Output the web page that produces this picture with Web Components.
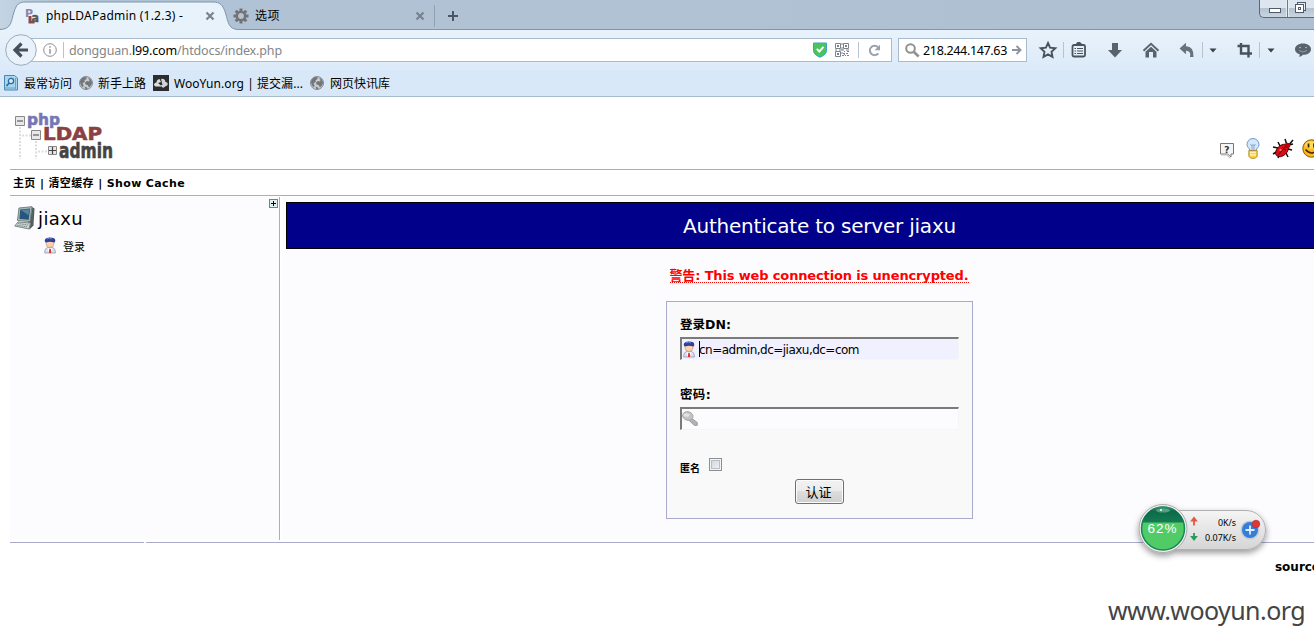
<!DOCTYPE html>
<html lang="zh-CN">
<head>
  <meta charset="UTF-8">
  <title>phpLDAPadmin (1.2.3) -</title>
  <style>
    html, body {
      margin: 0;
      width: 1314px;
      height: 640px;
      overflow: hidden;
      background: #fff;
    }
    body {
      position: relative;
      font-family: "Noto Sans", "Noto Sans CJK SC", sans-serif;
      font-size: 12px;
      color: #000;
    }
  </style>
</head>
<body>

<browser-tabs></browser-tabs>
<nav-toolbar></nav-toolbar>
<bookmark-bar></bookmark-bar>
<pla-page></pla-page>
<speed-widget></speed-widget>

<script>
  // Inline SVG for each icon: [width, height, markup]
  const ICONS = {
    pla: [16, 16, '<g font-family="DejaVu Sans" font-weight="bold"><text x="1" y="9" font-size="11" fill="#8d83a8">P</text><text x="7.500" y="13.500" font-size="12" fill="#555" stroke="#555" stroke-width=".4" textLength="7.500" lengthAdjust="spacingAndGlyphs">a</text></g><path d="M4.500 8v7.500h6v-2.500h-3V8z" fill="#8a4a4c"/>'],
    close: [10, 10, '<path d="M1.500 1.500l7 7M8.500 1.500l-7 7" stroke="#78838e" stroke-width="2.200"/>'],
    gear: [16, 16, '<g stroke="#737373" stroke-width="3"><path d="M8 .5v15M.5 8h15M2.700 2.700l10.600 10.600M13.300 2.700l-10.600 10.600"/></g><circle cx="8" cy="8" r="5.300" fill="#737373"/><circle cx="8" cy="8" r="2.900" fill="#b3c4d5"/>'],
    plus: [12, 12, '<path d="M6 1v10M1 6h10" stroke="#4a5763" stroke-width="2"/>'],
    back: [32, 32, '<circle cx="16" cy="16" r="15.300" fill="#e9f2fb" stroke="#9bacbf"/><path d="M16.500 9.500L10 16l6.500 6.500M10.500 16H23" fill="none" stroke="#44505c" stroke-width="3.200"/>'],
    info: [14, 14, '<circle cx="7" cy="7" r="6.300" fill="none" stroke="#8e8e8e"/><path d="M7 6v4.800M7 3.200v1.600" stroke="#8e8e8e" stroke-width="1.400"/>'],
    shield: [14, 16, '<path d="M.5 1h13v7.500q0 4-6.500 6.800Q.5 12.500.5 8.500z" fill="#4cc45c" stroke="#36a7c8"/><path d="M3.800 6.800l2.500 2.700 4.200-4.600" fill="none" stroke="#fff" stroke-width="1.900"/>'],
    qr: [14, 14, '<g fill="none" stroke="#7b848d"><path d="M.5.500h5v5h-5zM8.500.500h5v5h-5zM.5 8.500h5v5h-5z"/><path d="M2 3h2M10 3h2M2 11h2" stroke-width="2"/><path d="M7 0v2M7 4v3M0 7h2M4 7h5M11 7h3M7 9v2M9 8.500h1M12 8.500h2M8 10.500h2M11 10.500h2M7 12.500h2M10 12.500h1M12 12.500h2M9 11.500h1"/></g>'],
    reload: [13, 13, '<path d="M10.300 9.300A4.700 4.700 0 1 1 10 3.200" fill="none" stroke="#98a1ab" stroke-width="2"/><path d="M12 .8v5.400H6.600z" fill="#98a1ab"/>'],
    search: [15, 15, '<circle cx="5.500" cy="5.500" r="4.300" fill="none" stroke="#919191" stroke-width="2"/><path d="M8.700 8.700l5 4.800" stroke="#919191" stroke-width="2.600"/>'],
    go: [10, 10, '<path d="M0 5h8M4.500 1l4 4-4 4" fill="none" stroke="#8b959f" stroke-width="1.900"/>'],
    star: [18, 18, '<path d="M9 2l2.100 4.700 5.200.6-3.800 3.500 1 5.100L9 13.400l-4.500 2.500 1-5.100L1.700 7.300l5.200-.6z" fill="none" stroke="#49535d" stroke-width="1.900"/>'],
    list: [18, 18, '<rect x="2.500" y="4" width="12.500" height="11.500" rx="1.500" fill="#e6eff8" stroke="#49535d" stroke-width="1.800"/><path d="M6 4V2.500L7.500 1h2.500l1.500 1.500V5H6z" fill="#49535d"/><path d="M4.500 7.500h1.500m1 0h6M4.500 10h1.500m1 0h6M4.500 12.500h1.500m1 0h6" stroke="#49535d" stroke-width="1.100"/>'],
    down: [18, 18, '<path d="M6 2h6v7h4l-7 7.500L2 9h4z" fill="#59636d"/>'],
    home: [18, 18, '<path d="M1.500 9.700L9 2.700l7.500 7" fill="none" stroke="#59636d" stroke-width="1.900"/><path d="M9 5.700l5.500 5V16.500H11V11H7v5.500H3.500v-5.800z" fill="#59636d"/>'],
    undo: [18, 18, '<path d="M1.500 7.500L8 1.800v3.500q8 .2 7.500 10.700H12q1.500-6-4-6.300v3.500z" fill="#68727c"/>'],
    caret: [8, 5, '<path d="M.5.500h7L4 4.500z" fill="#39424a"/>'],
    crop: [18, 18, '<path d="M5 2v10.500h11M1.500 5h11v11.500" fill="none" stroke="#49535d" stroke-width="2.400"/>'],
    chat: [18, 18, '<path d="M9 2.500c4.800 0 8 2.500 8 5.700s-3.200 5.600-8 5.600q-1.500 2-4 2 1-1 .6-2.600C2.700 12.400 1 10.600 1 8.200 1 5 4.200 2.500 9 2.500z" fill="#59636d"/><circle cx="6" cy="6.500" r=".8" fill="#b5c2cf"/><circle cx="12" cy="6.500" r=".8" fill="#b5c2cf"/><path d="M5 9.500q4 3 8 0" fill="none" stroke="#8f9aa5"/>'],
    visited: [14, 16, '<path d="M.5.500h10l3 2.500v12H.5z" fill="#a9d4ee" stroke="#4888b5"/><path d="M11.500 3v11M.5 13h11" stroke="#65a5cf" fill="none"/><circle cx="7" cy="6" r="2.600" fill="#d5effa" stroke="#2d699c" stroke-width="1.300"/><path d="M5.200 8L2.500 11" stroke="#2d699c" stroke-width="1.800"/>'],
    globe: [14, 14, '<circle cx="7" cy="7" r="6.500" fill="#c9cdd1" stroke="#85898d"/><path d="M1 5q1.500-3 4-4l3 .5L7 3.500 5.500 4 6 5.500 3.500 7.500 4.500 9 4 11.500Q1 9 1 5zM9 2l2 .5q2 2 2 5L11.500 10 10 11.500 8.500 9 6.500 8.500 6 6.500 8 5l2 .5.500-1.500zM5.500 10.500l2.500 1 .5 1.500-2 .2z" fill="#72767a"/>'],
    wooyun: [16, 16, '<rect width="16" height="16" fill="#2b2d30"/><path d="M2.500 11.500Q.8 10.800 1 9.300q.6-1.800 2.500-1.800Q3.500 4.500 6.500 4l1.500 3-3 1 4 3.500z" fill="#ddd"/><path d="M8 4q3.800-.8 4.500 3 2.200.2 2.300 2-.2 2-2.200 2.200L10 13 7.500 10h2z" fill="#d2d4d5"/>'],
    help: [16, 17, '<path d="M1.500 1.500h13v10.500H12v3L8.500 12H1.500z" fill="#f5f5f5" stroke="#777"/><path d="M2 13h5.500l4 3.300" fill="none" stroke="#bbb"/><text x="5.300" y="10.500" font-family="DejaVu Sans" font-weight="bold" font-size="9" fill="#333">?</text>'],
    bulb: [16, 21, '<path d="M5 12.500C4.500 10 2 9.500 2 6.500a5.800 5.800 0 0 1 12 0C14 9.500 11.500 10 11 12.500z" fill="#d4e7fb" stroke="#6e98c8"/><path d="M5.500 6l1.500 2 1-1.500 1 1.500 1.500-2M7 8v4M9 8v4" fill="none" stroke="#789bc5" stroke-width=".8"/><path d="M3.800 12.500h8.400v6q-1.500 2-4.200 2t-4.200-2z" fill="#f5cf40" stroke="#a98220" stroke-width=".8"/><path d="M5 14.500h6M5 17h6" stroke="#fff3b5" stroke-width="1.300"/>'],
    bug: [22, 21, '<path d="M6 10L1 9M6 13l-5 3M8 16l-2 4M8 8L6 4M15 7l-2-6M16 8l5-6M16 11l4 1M14 15l2 4M17 7l4-1" stroke="#111" stroke-width="1.500" fill="none"/><ellipse cx="10" cy="12.500" rx="7.500" ry="5" transform="rotate(-43 10 12.500)" fill="#e00a12" stroke="#360000" stroke-width=".8"/><circle cx="15.500" cy="7.500" r="2.800" fill="#c0000a"/><path d="M6.500 16.500l7.500-8.500M10 9l4 3.500" stroke="#650008"/><circle cx="8.500" cy="12" r="1.100" fill="#ff8b8b"/>'],
    smile: [19, 19, '<circle cx="9.500" cy="9.500" r="8.700" fill="#ffb81f" stroke="#8a5800"/><ellipse cx="8.500" cy="6" rx="5.500" ry="3.700" fill="#ffda55"/><path d="M6.500 4.500v4M12 4.500v4" stroke="#322000" stroke-width="1.700"/><path d="M3.500 10.500q6 7 12 0" fill="none" stroke="#4d2900" stroke-width="1.500"/>'],
    expand: [9, 9, '<rect x=".5" y=".5" width="8" height="8" fill="#e0eff1" stroke="#777f86"/><path d="M4.500 2v5M2 4.500h5" stroke="#000"/>'],
    computer: [22, 24, '<path d="M18 1l2.500 1.500-1 17-4 4-2-5z" fill="#53605e"/><path d="M5 2L18 .7l-2 14.800L3.500 14.500z" fill="#aebbb9" stroke="#74817f"/><path d="M6.200 3.500l10-1-1.400 11.300-9.400-.7z" fill="#27567d"/><path d="M7 4l8.500-.8-1 6z" fill="#5283a1"/><path d="M4 16l12.500 1-1.500 6L.7 20z" fill="#cbd5d1" stroke="#7c8885"/><path d="M4 17.500l10 1.500M3 19.300l10 1.500" stroke="#7d8986" stroke-dasharray="1.500 .7"/>'],
    user: [12, 17, '<path d="M.7 16q0-5 3.200-5.500h4.300q3.200.5 3.200 5.500z" fill="#dcdfea" stroke="#9297b5" stroke-width=".8"/><path d="M3.500 10.700L6 12.500l2.500-1.800L7.500 16h-3z" fill="#fff"/><circle cx="6" cy="6.500" r="4" fill="#ffd3aa" stroke="#bd9b84" stroke-width=".7"/><path d="M.7 4Q.6.500 6 .5t5.300 3.200l-.5 1.800L6 4.800l-4.500.6z" fill="#303f99"/><path d="M3 2q2.500-1.500 5 0" stroke="#7585cc" fill="none"/><path d="M5.300 12h1.500l.6 4H4.700z" fill="#e53033"/>'],
    key: [16, 15, '<path d="M8 6l7.300 5.500v2.800l-2.800.2L6 8.500z" fill="#b3b3b3" stroke="#909090" stroke-width=".8"/><ellipse cx="5.800" cy="5" rx="5.300" ry="4.300" transform="rotate(15 5.800 5)" fill="#c3c3c3" stroke="#a0a0a0" stroke-width=".8"/><ellipse cx="4.500" cy="4" rx="3" ry="1.800" fill="#e3e3e3"/>'],
    logo: [100, 50, `
      <g stroke="#ddd" stroke-width="2" stroke-dasharray="2 1.500"><path d="M6 16v32M8 24.500h9M22 30v18M24 40.500h9"/></g>
      <g fill="#e8e8e8" stroke="#888"><path d="M1.500 5.500h9v9h-9zM17.500 19.500h9v9h-9zM34.500 35.500h8v8h-8z"/></g>
      <path d="M3 10h6M19 24h6M35 39.500h7M38.500 36v7" stroke="#444" stroke-width="1.200"/>
      <g font-family="DejaVu Sans" font-weight="bold" stroke-width=".6">
        <text x="13" y="14" font-size="16" fill="#7776b5" stroke="#7776b5" textLength="33" lengthAdjust="spacingAndGlyphs">php</text>
        <text x="29" y="29" font-size="18.500" fill="#8b4043" stroke="#8b4043" textLength="59" lengthAdjust="spacingAndGlyphs">LDAP</text>
        <text x="45" y="46.500" font-size="20.500" fill="#444" stroke="#444" textLength="54" lengthAdjust="spacingAndGlyphs">admin</text>
      </g>`]
  };

  // <ui-icon name="...">
  class UiIcon extends HTMLElement {
    constructor() {
      super();
      this.attachShadow({ mode: 'open' });
    }
    connectedCallback() {
      const [w, h, art] = ICONS[this.getAttribute('name')];
      this.shadowRoot.innerHTML = `
        <style>:host { display: block; flex: none; } svg { display: block; overflow: visible; }</style>
        <svg width="${w}" height="${h}" viewBox="0 0 ${w} ${h}">${art}</svg>`;
    }
  }

  // <fit-text width="120">: spreads or tightens the letters to fill the width
  class FitText extends HTMLElement {
    constructor() {
      super();
      this.attachShadow({ mode: 'open' }).innerHTML = `
        <style>:host { display: block; flex: none; } span { display: block; width: max-content; white-space: nowrap; }</style>
        <span><slot></slot></span>`;
    }
    connectedCallback() {
      const width = Number(this.getAttribute('width'));
      const span = this.shadowRoot.querySelector('span');
      const count = this.textContent.length;
      this.style.width = width + 'px';
      span.style.letterSpacing = (width - span.getBoundingClientRect().width) / count + 'px';
    }
  }

  // Tab strip with the window buttons
  class BrowserTabs extends HTMLElement {
    constructor() {
      super();
      this.attachShadow({ mode: 'open' }).innerHTML = `
        <style>
          :host { display: flex; height: 30px; overflow: hidden; line-height: 16px;
            background: linear-gradient(90deg, #c4d4e3 0, #b0c3d6 60px, #b0c2d3 600px, #adbfd1);
            box-shadow: inset 0 -1px #7f95ab; }
          .active { display: grid; width: 240px; flex: none; }
          .active > * { grid-area: 1 / 1; }
          .row { display: flex; align-items: center; height: 31px; box-sizing: border-box; }
          .active .row { padding-left: 24px; }
          .active fit-text { margin-left: 6px; }
          .active .close { margin-left: 22px; }
          .other { margin-left: -7px; }
          .other fit-text { margin-left: 6px; }
          .other .close { margin-left: 135px; }
          .sep { width: 1px; height: 22px; margin: 0 12px 0 9px; background: #8fa1b4; }
          .controls { display: flex; width: 55px; height: 18px; margin-left: auto; box-sizing: border-box;
            border: 1px solid #5c6878; border-width: 0 0 1px 1px; border-radius: 0 0 0 5px; overflow: hidden;
            background: linear-gradient(#dde6ef 45%, #b5c3d2 50%, #c9d6e2); }
          .controls svg { display: block; flex: none; }
        </style>
        <div class="active">
          <svg width="240" height="30"><path d="M0 29.500C12 29 11 21 14 12 16.500 4 19 2 26 2H213c7 0 10 3 12.500 11 3 10 3 16 12.500 16.500h2V31H0z" fill="#e8f2fb" stroke="#7f95ab"/></svg>
          <div class="row"><ui-icon name="pla"></ui-icon><fit-text width="137">phpLDAPadmin (1.2.3) -</fit-text><ui-icon class="close" name="close"></ui-icon></div>
        </div>
        <div class="row other">
          <ui-icon name="gear"></ui-icon><fit-text width="25">选项</fit-text>
          <ui-icon class="close" name="close"></ui-icon><span class="sep"></span><ui-icon name="plus"></ui-icon>
        </div>
        <div class="controls">
          <svg width="55" height="17"><path d="M27.500 0v17" stroke="#6c7989"/><path d="M26.500 0v17M28.500 0v17" stroke="#e6eef5"/><rect x="9.500" y="8.500" width="11" height="4" fill="#fff" stroke="#505a68"/><rect x="37.500" y="2.500" width="8" height="8" fill="#e8edf2" stroke="#505a68"/><rect x="35.500" y="4.500" width="8" height="8" fill="#fff" stroke="#505a68"/><rect x="38.500" y="7.500" width="2" height="2" fill="#fff" stroke="#505a68"/></svg>
        </div>`;
    }
  }

  // Back button, address field, search field and toolbar buttons
  class NavToolbar extends HTMLElement {
    constructor() {
      super();
      this.attachShadow({ mode: 'open' }).innerHTML = `
        <style>
          :host { display: flex; align-items: center; height: 40px; padding-left: 5px;
            background: linear-gradient(#e8f2fb, #dceaf9); font-size: 12.5px; line-height: 20px; overflow: hidden; }
          .back { z-index: 1; }
          .field { display: flex; align-items: center; height: 24px; box-sizing: border-box; border: 1px solid #a9bacb; background: #fff; }
          .url { width: 861px; margin-left: -6px; padding-left: 11px; color: #858585; }
          .field fit-text { padding-top: 2px; }
          .url fit-text { margin-left: 5px; }
          b { font-weight: normal; color: #000; }
          .sep { width: 1px; height: 16px; background: #b5c4d3; flex: none; }
          .search { width: 129px; margin-left: 6px; padding-left: 6px; }
          .search fit-text { margin: 0 6px 0 3px; }
        </style>
        <ui-icon class="back" name="back"></ui-icon>
        <div class="field url">
          <ui-icon name="info"></ui-icon><span class="sep" style="margin-left: 6px"></span>
          <fit-text width="213">dongguan.<b>l99.com</b>/htdocs/index.php</fit-text>
          <ui-icon name="shield" style="margin-left: 531px"></ui-icon>
          <ui-icon name="qr" style="margin-left: 8px"></ui-icon>
          <span class="sep" style="margin: 0 9px 0 9px"></span>
          <ui-icon name="reload"></ui-icon>
        </div>
        <div class="field search">
          <ui-icon name="search"></ui-icon><fit-text width="84">218.244.147.63</fit-text><ui-icon name="go" style="margin-left: -1px"></ui-icon>
        </div>
        <ui-icon name="star" style="margin-left: 12px"></ui-icon>
        <span class="sep" style="margin: 0 6px"></span>
        <ui-icon name="list"></ui-icon>
        <ui-icon name="down" style="margin-left: 18px"></ui-icon>
        <ui-icon name="home" style="margin-left: 18px"></ui-icon>
        <ui-icon name="undo" style="margin-left: 18px"></ui-icon>
        <span class="sep" style="margin: 0 6px"></span>
        <ui-icon name="caret"></ui-icon>
        <ui-icon name="crop" style="margin-left: 19px"></ui-icon>
        <span class="sep" style="margin: 0 7px 0 5px"></span>
        <ui-icon name="caret"></ui-icon>
        <ui-icon name="chat" style="margin-left: 19px"></ui-icon>`;
    }
  }

  class BookmarkBar extends HTMLElement {
    constructor() {
      super();
      this.attachShadow({ mode: 'open' }).innerHTML = `
        <style>
          :host { display: flex; align-items: center; box-sizing: border-box; height: 27px; padding: 0 0 0 4px;
            background: #d9e8f8; border-bottom: 1px solid #a5bbd1; line-height: 18px; }
          ui-icon + fit-text { margin-left: 6px; padding-top: 2px; }
          fit-text + ui-icon { margin-left: 7px; }
          .tight { margin-left: 5px !important; }
        </style>
        <ui-icon name="visited"></ui-icon><fit-text width="48">最常访问</fit-text>
        <ui-icon name="globe"></ui-icon><fit-text class="tight" width="48">新手上路</fit-text>
        <ui-icon name="wooyun"></ui-icon><fit-text class="tight" width="129">WooYun.org | 提交漏...</fit-text>
        <ui-icon name="globe"></ui-icon><fit-text width="60">网页快讯库</fit-text>`;
    }
  }

  // Label with a sunken input field; the icon goes into the "icon" slot
  class LoginField extends HTMLElement {
    constructor() {
      super();
      this.attachShadow({ mode: 'open' }).innerHTML = `
        <style>
          :host { display: block; height: 70px; }
          .label { font-weight: bold; font-size: 12.5px; line-height: 18px; height: 21px; }
          .input { display: flex; align-items: center; width: 279px; height: 23px; box-sizing: border-box;
            border: 2px solid; border-color: #7b7b7b #f5f5f8 #f5f5f8 #7b7b7b; border-right-width: 1px; border-bottom-width: 1px;
            background: var(--field-bg, #fcfcff); font-size: 12px; line-height: 18px; }
          .icon { width: 17px; padding-left: 1px; box-sizing: border-box; }
        </style>
        <div class="label"><slot name="label"></slot></div>
        <div class="input"><div class="icon"><slot name="icon"></slot></div><slot></slot></div>`;
    }
  }

  // The phpLDAPadmin page below the browser bars
  class PlaPage extends HTMLElement {
    constructor() {
      super();
      this.attachShadow({ mode: 'open' }).innerHTML = `
        <style>
          :host { display: block; padding-left: 10px; height: 543px; box-sizing: border-box; overflow: hidden;
            font-family: "DejaVu Sans", "Noto Sans CJK SC", sans-serif; }
          header { display: flex; height: 73px; box-sizing: border-box; border-bottom: 1px solid #aaaacc; }
          .logo { margin: 14px 0 0 4px; }
          .tools { display: flex; align-items: center; height: 22px; margin: 40px -7px 0 auto; }
          .menu { display: flex; align-items: center; height: 26px; box-sizing: border-box; padding: 2px 0 0 3px;
            border-bottom: 1px solid #aaaacc; font-weight: bold; font-size: 11px; line-height: 18px; }
          .body { display: flex; height: 344px; }
          .tree { display: grid; grid-template-columns: 1fr 9px; width: 270px; height: 343px; box-sizing: border-box; flex: none;
            padding: 2px 1px 0 4px; border-right: 1px solid #aaaacc; background: #fcfcff; margin-top: 1px; }
          .server { display: flex; align-items: center; height: 24px; margin-top: 7px; font-size: 18px; line-height: 24px; }
          .server fit-text { margin: 2px 0 0 2px; }
          .login { display: flex; align-items: center; height: 20px; margin: 7px 0 0 30px; font-size: 11px; line-height: 18px; gap: 7px; }
          .login ui-icon { margin-top: -3px; }
          .login fit-text { margin-top: 2px; }
          main { width: 1067px; flex: none; padding: 6px 0 0 4px; margin: 0 0 0 2px; background: #fcfcff; height: 338px; }
          h3 { display: flex; justify-content: center; align-items: center; height: 47px; box-sizing: border-box; margin: 0;
            border: 1px solid #000; background: #00008b; color: #fff; font-weight: normal; font-size: 20px; line-height: 28px; }
          .warn { display: flex; justify-content: center; height: 52px; box-sizing: border-box; padding-top: 17px; color: #f00; font-weight: bold; font-size: 13px; line-height: 20px; }
          .warn fit-text { height: 17px; margin-left: -1px; border-bottom: 1px dotted #f00; box-sizing: border-box; }
          form { width: 307px; height: 218px; margin: 0 auto; box-sizing: border-box; border: 1px solid #aaaacc; background: #f9f9f9; padding: 14px 13px; }
          .caret { width: 1px; height: 16px; background: #000; }
          .value { margin: 2px 0 0 -1px; }
          .anon { display: flex; height: 23px; font-weight: bold; font-size: 10px; line-height: 23px; }
          .check { width: 13px; height: 13px; box-sizing: border-box; margin: 1px 0 0 9px; border: 1px solid #8e8f8f;
            box-shadow: inset 0 0 0 1px #f4f4f4, inset 0 0 0 2px #b8bec4; background: linear-gradient(135deg, #ccd2d8, #f6f6f6); }
          .submit { display: flex; align-items: center; justify-content: center; width: 49px; height: 25px; box-sizing: border-box; margin: -1px auto 0;
            padding-right: 2px; border: 1px solid #707070; border-radius: 3px; box-shadow: inset 0 0 0 1px #fcfcfc; font-size: 13px; color: #000;
            background: linear-gradient(#f2f2f2 0, #ebebeb 50%, #dddddd 50%, #cfcfcf); }
          .rules { display: flex; gap: 2px; padding-top: 2px; }
          .rules i { height: 1px; background: #aaaacc; }
          footer { height: 96px; display: flex; flex-direction: column; align-items: flex-end; }
          .source { margin: 16px -6px 0 0; font-weight: bold; font-size: 12px; line-height: 16px; }
          .site { margin: 17px 9px 0 0; font-family: "Noto Sans", sans-serif; font-size: 25px; line-height: 36px; color: #444; }
        </style>
        <header>
          <ui-icon class="logo" name="logo"></ui-icon>
          <div class="tools">
            <ui-icon name="help" style="padding-top: 4px"></ui-icon>
            <ui-icon name="bulb" style="margin-left: 10px"></ui-icon>
            <ui-icon name="bug" style="margin-left: 11px"></ui-icon>
            <ui-icon name="smile" style="margin-left: 8px"></ui-icon>
          </div>
        </header>
        <div class="menu"><fit-text width="172">主页 | 清空缓存 | Show Cache</fit-text></div>
        <div class="body">
          <div class="tree">
            <div>
              <div class="server"><ui-icon name="computer"></ui-icon><fit-text width="45">jiaxu</fit-text></div>
              <div class="login"><ui-icon name="user"></ui-icon><fit-text width="22">登录</fit-text></div>
            </div>
            <ui-icon name="expand"></ui-icon>
          </div>
          <main>
            <h3><fit-text width="273">Authenticate to server jiaxu</fit-text></h3>
            <div class="warn"><fit-text width="299">警告: This web connection is unencrypted.</fit-text></div>
            <form>
              <login-field style="--field-bg: #f0f0ff">
                <fit-text slot="label" width="51">登录DN:</fit-text>
                <ui-icon slot="icon" name="user"></ui-icon>
                <span class="caret"></span><fit-text class="value" width="160">cn=admin,dc=jiaxu,dc=com</fit-text>
              </login-field>
              <login-field>
                <fit-text slot="label" width="31">密码:</fit-text>
                <ui-icon slot="icon" name="key" style="margin: -2px 0 0 -1px"></ui-icon>
              </login-field>
              <div class="anon" style="padding-top: 1px"><fit-text width="20">匿名</fit-text><span class="check"></span></div>
              <div class="submit">认证</div>
            </form>
          </main>
        </div>
        <div class="rules"><i style="width: 134px"></i><i style="flex: 1"></i></div>
        <footer>
          <fit-text class="source" width="45">source</fit-text>
          <fit-text class="site" width="197">www.wooyun.org</fit-text>
        </footer>`;
    }
  }

  // Floating memory and network meter, drawn over the page
  class SpeedWidget extends HTMLElement {
    constructor() {
      super();
      this.attachShadow({ mode: 'open' }).innerHTML = `
        <style>
          :host { display: grid; position: absolute; left: 1138px; top: 503px; width: 130px; height: 60px; }
          svg { display: block; overflow: visible; }
        </style>
        <svg width="130" height="60">
          <defs>
            <linearGradient id="pill" x2="0" y2="1"><stop stop-color="#f5f5f5"/><stop offset="1" stop-color="#d5d5d5"/></linearGradient>
            <linearGradient id="dark" x2="0" y2="1"><stop stop-color="#3d9476"/><stop offset=".3" stop-color="#0c6a48"/><stop offset="1" stop-color="#157b55"/></linearGradient>
            <filter id="shade" x="-20%" y="-20%" width="140%" height="160%"><feDropShadow dx="0" dy="3" stdDeviation="3" flood-opacity=".4"/></filter>
          </defs>
          <g filter="url(#shade)">
            <rect x="20" y="7.500" width="107.500" height="39" rx="19.500" fill="url(#pill)" stroke="#b0b0b0"/>
            <circle cx="25" cy="25.500" r="24" fill="#f0f0f0" stroke="#aaa"/>
          </g>
          <circle cx="25" cy="25.500" r="21.500" fill="#50cb66" stroke="#168757" stroke-width="1.500"/>
          <path d="M4.200 19.500a21.500 21.500 0 0 1 41.600 0z" fill="url(#dark)"/>
          <ellipse cx="25" cy="7.500" rx="7" ry="2" fill="#8fd2b7" opacity=".5"/><circle cx="23" cy="7" r="1" fill="#fff"/>
          <text x="9.500" y="30" font-family="Liberation Sans" font-size="13.500" fill="#fff" textLength="29">62%</text>
          <path d="M56 22.500v-5h-2l2-2.500 2 2.500h-2" fill="#e05a43" stroke="#e05a43" stroke-width="1.800"/>
          <path d="M56 30v4h-2l2 2.500 2-2.500h-2" fill="#2b9a57" stroke="#2b9a57" stroke-width="1.800"/>
          <g font-family="Noto Sans" font-size="9.500" fill="#000">
            <text x="80" y="23" textLength="18" lengthAdjust="spacingAndGlyphs">0K/s</text>
            <text x="67" y="38" textLength="31" lengthAdjust="spacingAndGlyphs">0.07K/s</text>
          </g>
          <circle cx="112" cy="27" r="9.500" fill="#c7cbd0"/><circle cx="112" cy="27" r="8" fill="#347ddb"/>
          <path d="M112 22.500v9M107.500 27h9" stroke="#e3eefb" stroke-width="1.800"/>
          <circle cx="118" cy="21" r="3.800" fill="#dc3937" stroke="#b92221" stroke-width=".6"/>
        </svg>`;
    }
  }

  customElements.define('ui-icon', UiIcon);
  customElements.define('fit-text', FitText);
  customElements.define('login-field', LoginField);
  customElements.define('browser-tabs', BrowserTabs);
  customElements.define('nav-toolbar', NavToolbar);
  customElements.define('bookmark-bar', BookmarkBar);
  customElements.define('pla-page', PlaPage);
  customElements.define('speed-widget', SpeedWidget);
</script>

</body>
</html>
